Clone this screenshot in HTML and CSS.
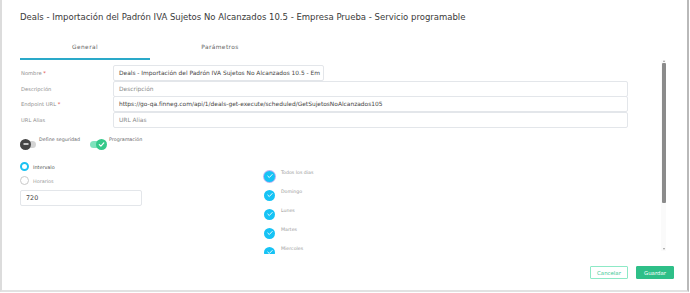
FILE: index.html
```html
<!DOCTYPE html>
<html lang="es">
<head>
<meta charset="utf-8">
<title>Deals - Servicio programable</title>
<link rel="stylesheet" href="styles.css">
</head>
<body>
<div class="modal">
  <div class="header">
    <h1 class="title">Deals - Importación del Padrón IVA Sujetos No Alcanzados 10.5 - Empresa Prueba - Servicio programable</h1>
  </div>
  <div class="tabs">
    <div class="tab active">General</div>
    <div class="tab tab-wide">Parámetros</div>
  </div>
  <div class="body">
    <div class="content">
      <div class="form-row">
        <div class="label">Nombre <span class="req">*</span></div>
        <div class="input input-short">Deals - Importación del Padrón IVA Sujetos No Alcanzados 10.5 - Em</div>
      </div>
      <div class="form-row">
        <div class="label">Descripción</div>
        <div class="input placeholder">Descripción</div>
      </div>
      <div class="form-row">
        <div class="label">Endpoint URL <span class="req">*</span></div>
        <div class="input">https://go-qa.finneg.com/api/1/deals-get-execute/scheduled/GetSujetosNoAlcanzados105</div>
      </div>
      <div class="form-row">
        <div class="label">URL Alias</div>
        <div class="input placeholder">URL Alias</div>
      </div>

      <div class="toggles">
        <div class="toggle-item">
          <span class="toggle off">
            <span class="knob"><svg width="6" height="6" viewBox="0 0 6 6"><rect x="0.5" y="2.3" width="5" height="1.4" fill="#fff"/></svg></span>
          </span>
          <span class="toggle-label">Define seguridad</span>
        </div>
        <div class="toggle-item">
          <span class="toggle on">
            <span class="knob"><svg width="7" height="7" viewBox="0 0 7 7"><path d="M1.3 3.6 L2.9 5.1 L5.8 1.9" fill="none" stroke="#fff" stroke-width="1.2" stroke-linecap="round" stroke-linejoin="round"/></svg></span>
          </span>
          <span class="toggle-label">Programación</span>
        </div>
      </div>

      <div class="schedule">
        <div class="sched-left">
          <div class="radio-row"><span class="radio checked"></span><span class="radio-label strong">Intervalo</span></div>
          <div class="radio-row"><span class="radio"></span><span class="radio-label">Horarios</span></div>
          <div class="input input-num">720</div>
        </div>
        <div class="days">
          <div class="day"><span class="check focus"><svg width="8" height="8" viewBox="0 0 8 8"><path d="M1.8 4.1 L3.3 5.5 L6.2 2.5" fill="none" stroke="#fff" stroke-width="0.9" stroke-linecap="round" stroke-linejoin="round"/></svg></span><span class="day-label">Todos los dias</span></div>
          <div class="day"><span class="check"><svg width="8" height="8" viewBox="0 0 8 8"><path d="M1.8 4.1 L3.3 5.5 L6.2 2.5" fill="none" stroke="#fff" stroke-width="0.9" stroke-linecap="round" stroke-linejoin="round"/></svg></span><span class="day-label">Domingo</span></div>
          <div class="day"><span class="check"><svg width="8" height="8" viewBox="0 0 8 8"><path d="M1.8 4.1 L3.3 5.5 L6.2 2.5" fill="none" stroke="#fff" stroke-width="0.9" stroke-linecap="round" stroke-linejoin="round"/></svg></span><span class="day-label">Lunes</span></div>
          <div class="day"><span class="check"><svg width="8" height="8" viewBox="0 0 8 8"><path d="M1.8 4.1 L3.3 5.5 L6.2 2.5" fill="none" stroke="#fff" stroke-width="0.9" stroke-linecap="round" stroke-linejoin="round"/></svg></span><span class="day-label">Martes</span></div>
          <div class="day"><span class="check"><svg width="8" height="8" viewBox="0 0 8 8"><path d="M1.8 4.1 L3.3 5.5 L6.2 2.5" fill="none" stroke="#fff" stroke-width="0.9" stroke-linecap="round" stroke-linejoin="round"/></svg></span><span class="day-label">Miercoles</span></div>
        </div>
      </div>
    </div>
    <div class="scrollbar">
      <div class="sb-arrow up"></div>
      <div class="sb-track"><div class="sb-thumb"></div></div>
      <div class="sb-arrow down"></div>
    </div>
  </div>
  <div class="footer">
    <button class="btn btn-outline">Cancelar</button>
    <button class="btn btn-primary">Guardar</button>
  </div>
</div>
</body>
</html>
```

FILE: styles.css
```css
* { box-sizing: border-box; }
html, body { margin: 0; padding: 0; background: #fff; }
body {
  font-family: "DejaVu Sans", "Noto Sans", sans-serif;
  color: #333;
  width: 690px;
  height: 293px;
  overflow: hidden;
}
.modal {
  width: 689px;
  height: 292px;
  border-left: 2px solid #dcdcdc;
  border-right: 2px solid #b9b9b9;
  border-bottom: 2px solid #e2e2e2;
  display: flex;
  flex-direction: column;
}
.header {
  padding: 12px 0 0 18px;
  height: 38px;
}
.title {
  margin: 0;
  font-size: 8.5px;
  font-weight: normal;
  color: #3a3a3a;
  white-space: nowrap;
}
.tabs {
  display: flex;
  margin-left: 18px;
  height: 22px;
}
.tab {
  width: 130px;
  text-align: center;
  font-size: 5.9px;
  letter-spacing: 0.4px;
  color: #666;
  padding-top: 6px;
}
.tab-wide { width: 140px; }
.tab.active {
  border-bottom: 2px solid #2aa9c9;
}
.body {
  display: flex;
  height: 194px;
  overflow: hidden;
}
.content {
  flex: 1;
  padding: 5px 0 0 18px;
  overflow: hidden;
}
.form-row {
  display: flex;
  align-items: center;
  height: 15.7px;
  width: 608px;
}
.label {
  width: 93px;
  padding-left: 1px;
  font-size: 5.2px;
  color: #909090;
}
.req { color: #e0453a; }
.input {
  flex: 1;
  height: 16px;
  border: 1px solid #e3e6ea;
  border-radius: 2px;
  padding: 0 5px;
  font-size: 5.9px;
  color: #444;
  display: flex;
  align-items: center;
  white-space: nowrap;
  overflow: hidden;
}
.input-short { flex: 0 0 211px; }
.placeholder { color: #8a8a8a; }

.toggles {
  display: flex;
  gap: 10px;
  margin-top: 10px;
  height: 20px;
}
.toggle-item {
  display: flex;
  align-items: flex-start;
  gap: 3px;
}
.toggle {
  position: relative;
  width: 16px;
  height: 7px;
  border-radius: 4px;
  margin-top: 3px;
}
.toggle.off { background: #d4d4d4; }
.toggle.on { background: #7fe3bd; }
.knob {
  position: absolute;
  top: -2px;
  width: 11px;
  height: 11px;
  border-radius: 50%;
  display: flex;
  align-items: center;
  justify-content: center;
}
.toggle.off .knob { left: 0; background: #454545; }
.toggle.on .knob { right: -1px; background: #35c98a; }
.toggle-label {
  font-size: 4.8px;
  color: #666;
  margin-top: -1px;
}

.schedule {
  display: flex;
  margin-top: 2px;
}
.sched-left {
  width: 244px;
}
.radio-row {
  display: flex;
  align-items: center;
  gap: 4px;
  height: 14px;
}
.radio {
  width: 9px;
  height: 9px;
  border-radius: 50%;
  border: 1px solid #c9c9c9;
  background: #fff;
}
.radio.checked {
  border: 2.4px solid #1cc2f2;
}
.radio-label {
  font-size: 4.9px;
  color: #999;
}
.radio-label.strong { color: #555; }
.input-num {
  width: 122px;
  flex: none;
  margin-top: 2px;
  font-size: 6.4px;
}
.days {
  padding-top: 11px;
}
.day {
  display: flex;
  align-items: flex-start;
  gap: 6px;
  height: 19px;
}
.check {
  width: 11px;
  height: 11px;
  border-radius: 50%;
  background: #16c3f5;
  display: flex;
  align-items: center;
  justify-content: center;
}
.check.focus {
  box-shadow: 0 0 0 1px #b9b2f2;
}
.day-label {
  font-size: 4.7px;
  color: #999;
  margin-top: -1px;
}

.scrollbar {
  width: 5px;
  margin-right: 21px;
  display: flex;
  flex-direction: column;
  background: #fafafa;
  height: 193px;
  margin-top: -2px;
}
.sb-arrow {
  height: 4px;
  display: flex;
  justify-content: center;
}
.sb-arrow.up::before {
  content: "";
  margin-top: 1px;
  border-left: 1.5px solid transparent;
  border-right: 1.5px solid transparent;
  border-bottom: 2px solid #999;
}
.sb-arrow.down::before {
  content: "";
  margin-top: 1px;
  border-left: 1.5px solid transparent;
  border-right: 1.5px solid transparent;
  border-top: 2px solid #999;
}
.sb-track {
  flex: 1;
  padding: 1px 0.5px 0;
}
.sb-thumb {
  height: 140px;
  background: #8b8b8b;
  border-radius: 1px;
}

.footer {
  display: flex;
  justify-content: flex-end;
  gap: 8px;
  padding: 12px 13px 0 0;
}
.btn {
  font-family: inherit;
  font-size: 5.4px;
  height: 13px;
  padding: 0;
  border-radius: 1px;
  cursor: pointer;
  white-space: nowrap;
  overflow: visible;
}
.btn-outline {
  width: 38px;
  background: #fff;
  color: #3dc894;
  border: 1px solid #8de9c6;
}
.btn-primary {
  width: 38px;
  background: #2ebf88;
  color: #fff;
  border: 1px solid #2ebf88;
}
```
